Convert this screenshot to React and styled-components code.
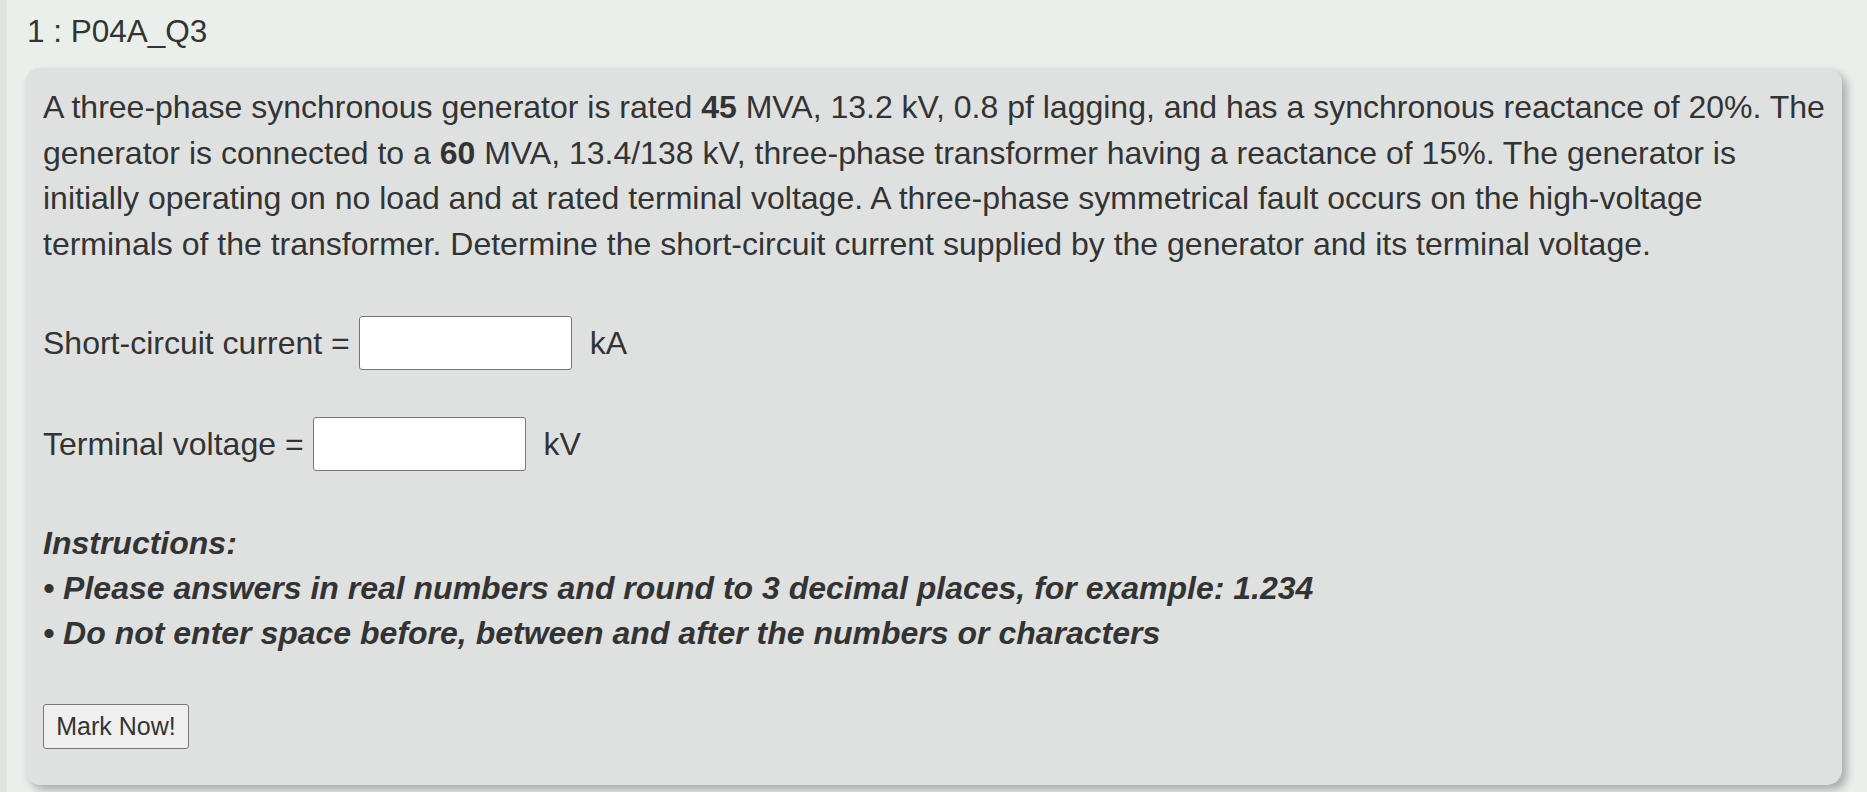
import React from 'react';
import styled, { createGlobalStyle } from 'styled-components';

const GlobalStyle = createGlobalStyle`
  html, body {
    margin: 0;
    padding: 0;
    background: #ebefec;
    font-family: 'Liberation Sans', Arial, sans-serif;
    color: #333;
  }
`;

const Page = styled.div`
  min-height: 792px;
  box-sizing: border-box;
  border-left: 7px solid #e1e3e1;
  padding: 13px 25px 0 18px;
`;

const Title = styled.h3`
  margin: 0 0 19px 2px;
  font-size: 31.5px;
  font-weight: 400;
  line-height: 36px;
  color: #333;
`;

const Card = styled.div`
  background: #dfe1e0;
  border-radius: 15px;
  padding: 17px 4px 36px 18px;
  box-shadow: 5px 5px 8px rgba(0, 0, 0, 0.28);
`;

const Question = styled.p`
  margin: 0;
  font-size: 32px;
  line-height: 45.6px;
`;

const AnswerRow = styled.div`
  display: flex;
  align-items: center;
  margin-top: ${(p) => p.gap}px;
  font-size: 32px;
  line-height: 45px;
`;

const Label = styled.span`
  margin-right: 9px;
`;

const Field = styled.input`
  width: 213px;
  height: 54px;
  box-sizing: border-box;
  border: 1px solid #767676;
  border-radius: 3px;
  background: #fff;
  margin-right: 18px;
  font-size: 24px;
`;

const Instructions = styled.div`
  margin-top: 50px;
  font-size: 32px;
  line-height: 45px;
  font-weight: 700;
  font-style: italic;
`;

const Line = styled.div``;

const MarkButton = styled.button`
  margin-top: 48px;
  width: 146px;
  height: 45px;
  box-sizing: border-box;
  border: 1px solid #767676;
  border-radius: 3px;
  background: #efefef;
  color: #333;
  font-family: 'Liberation Sans', Arial, sans-serif;
  font-size: 25px;
  padding: 0;
`;

export default function App() {
  return (
    <>
      <GlobalStyle />
      <Page>
        <Title>1 : P04A_Q3</Title>
        <Card>
          <Question>
            A three-phase synchronous generator is rated <b>45</b> MVA, 13.2 kV, 0.8 pf lagging, and has a
            synchronous reactance of 20%. The generator is connected to a <b>60</b> MVA, 13.4/138 kV,
            three-phase transformer having a reactance of 15%. The generator is initially operating on no
            load and at rated terminal voltage. A three-phase symmetrical fault occurs on the high-voltage
            terminals of the transformer. Determine the short-circuit current supplied by the generator and
            its terminal voltage.
          </Question>
          <AnswerRow gap={49}>
            <Label>Short-circuit current =</Label>
            <Field type="text" />
            kA
          </AnswerRow>
          <AnswerRow gap={47}>
            <Label>Terminal voltage =</Label>
            <Field type="text" />
            kV
          </AnswerRow>
          <Instructions>
            <Line>Instructions:</Line>
            <Line>• Please answers in real numbers and round to 3 decimal places, for example: 1.234</Line>
            <Line>• Do not enter space before, between and after the numbers or characters</Line>
          </Instructions>
          <MarkButton>Mark Now!</MarkButton>
        </Card>
      </Page>
    </>
  );
}
